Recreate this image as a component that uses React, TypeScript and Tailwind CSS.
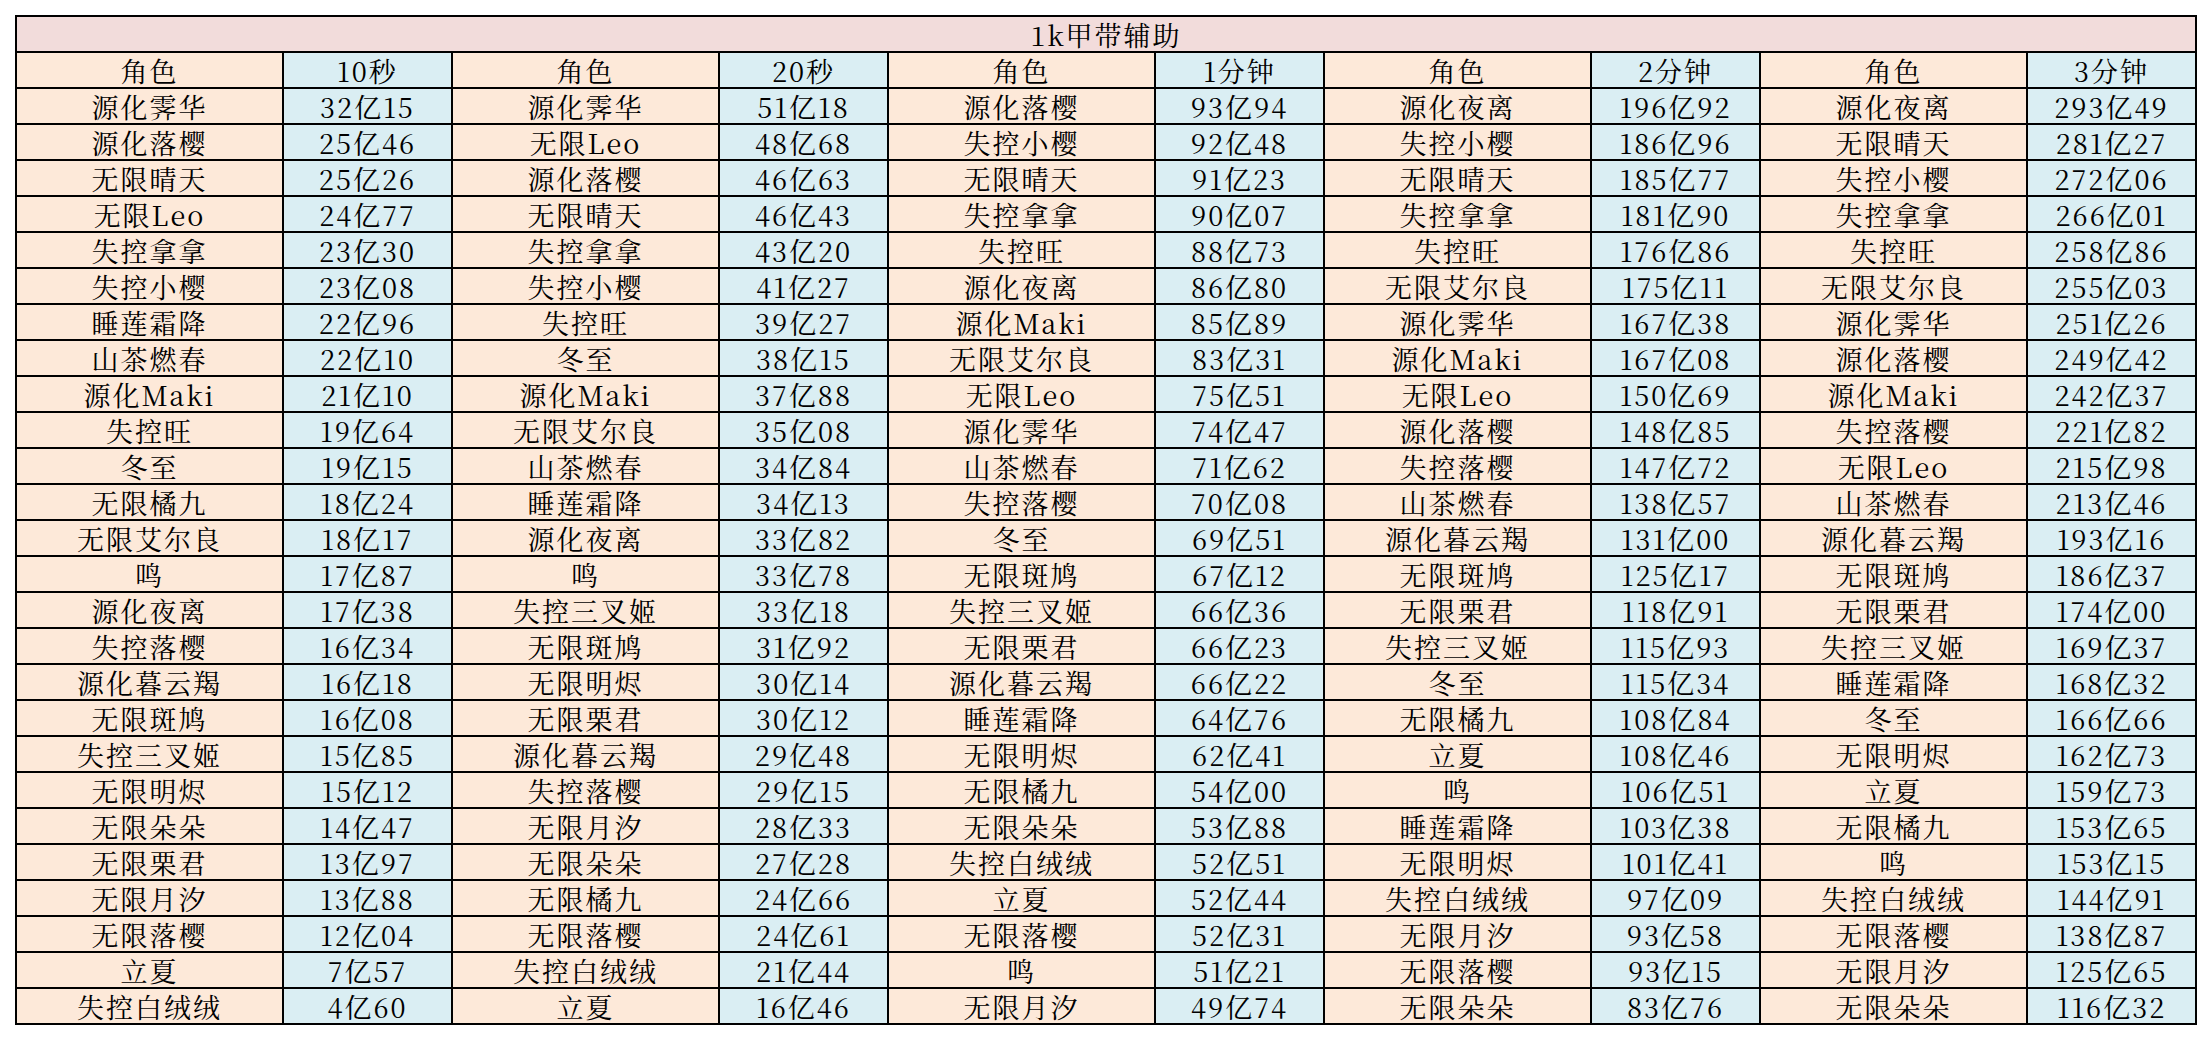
import * as React from "react";

type Row = [string, string, string, string, string, string, string, string, string, string];

const headers = ["角色", "10秒", "角色", "20秒", "角色", "1分钟", "角色", "2分钟", "角色", "3分钟"];

const rows: Row[] = [
  ["源化霁华", "32亿15", "源化霁华", "51亿18", "源化落樱", "93亿94", "源化夜离", "196亿92", "源化夜离", "293亿49"],
  ["源化落樱", "25亿46", "无限Leo", "48亿68", "失控小樱", "92亿48", "失控小樱", "186亿96", "无限晴天", "281亿27"],
  ["无限晴天", "25亿26", "源化落樱", "46亿63", "无限晴天", "91亿23", "无限晴天", "185亿77", "失控小樱", "272亿06"],
  ["无限Leo", "24亿77", "无限晴天", "46亿43", "失控拿拿", "90亿07", "失控拿拿", "181亿90", "失控拿拿", "266亿01"],
  ["失控拿拿", "23亿30", "失控拿拿", "43亿20", "失控旺", "88亿73", "失控旺", "176亿86", "失控旺", "258亿86"],
  ["失控小樱", "23亿08", "失控小樱", "41亿27", "源化夜离", "86亿80", "无限艾尔良", "175亿11", "无限艾尔良", "255亿03"],
  ["睡莲霜降", "22亿96", "失控旺", "39亿27", "源化Maki", "85亿89", "源化霁华", "167亿38", "源化霁华", "251亿26"],
  ["山茶燃春", "22亿10", "冬至", "38亿15", "无限艾尔良", "83亿31", "源化Maki", "167亿08", "源化落樱", "249亿42"],
  ["源化Maki", "21亿10", "源化Maki", "37亿88", "无限Leo", "75亿51", "无限Leo", "150亿69", "源化Maki", "242亿37"],
  ["失控旺", "19亿64", "无限艾尔良", "35亿08", "源化霁华", "74亿47", "源化落樱", "148亿85", "失控落樱", "221亿82"],
  ["冬至", "19亿15", "山茶燃春", "34亿84", "山茶燃春", "71亿62", "失控落樱", "147亿72", "无限Leo", "215亿98"],
  ["无限橘九", "18亿24", "睡莲霜降", "34亿13", "失控落樱", "70亿08", "山茶燃春", "138亿57", "山茶燃春", "213亿46"],
  ["无限艾尔良", "18亿17", "源化夜离", "33亿82", "冬至", "69亿51", "源化暮云羯", "131亿00", "源化暮云羯", "193亿16"],
  ["鸣", "17亿87", "鸣", "33亿78", "无限斑鸠", "67亿12", "无限斑鸠", "125亿17", "无限斑鸠", "186亿37"],
  ["源化夜离", "17亿38", "失控三叉姬", "33亿18", "失控三叉姬", "66亿36", "无限栗君", "118亿91", "无限栗君", "174亿00"],
  ["失控落樱", "16亿34", "无限斑鸠", "31亿92", "无限栗君", "66亿23", "失控三叉姬", "115亿93", "失控三叉姬", "169亿37"],
  ["源化暮云羯", "16亿18", "无限明烬", "30亿14", "源化暮云羯", "66亿22", "冬至", "115亿34", "睡莲霜降", "168亿32"],
  ["无限斑鸠", "16亿08", "无限栗君", "30亿12", "睡莲霜降", "64亿76", "无限橘九", "108亿84", "冬至", "166亿66"],
  ["失控三叉姬", "15亿85", "源化暮云羯", "29亿48", "无限明烬", "62亿41", "立夏", "108亿46", "无限明烬", "162亿73"],
  ["无限明烬", "15亿12", "失控落樱", "29亿15", "无限橘九", "54亿00", "鸣", "106亿51", "立夏", "159亿73"],
  ["无限朵朵", "14亿47", "无限月汐", "28亿33", "无限朵朵", "53亿88", "睡莲霜降", "103亿38", "无限橘九", "153亿65"],
  ["无限栗君", "13亿97", "无限朵朵", "27亿28", "失控白绒绒", "52亿51", "无限明烬", "101亿41", "鸣", "153亿15"],
  ["无限月汐", "13亿88", "无限橘九", "24亿66", "立夏", "52亿44", "失控白绒绒", "97亿09", "失控白绒绒", "144亿91"],
  ["无限落樱", "12亿04", "无限落樱", "24亿61", "无限落樱", "52亿31", "无限月汐", "93亿58", "无限落樱", "138亿87"],
  ["立夏", "7亿57", "失控白绒绒", "21亿44", "鸣", "51亿21", "无限落樱", "93亿15", "无限月汐", "125亿65"],
  ["失控白绒绒", "4亿60", "立夏", "16亿46", "无限月汐", "49亿74", "无限朵朵", "83亿76", "无限朵朵", "116亿32"],
];

function Cell({ text, index }: { text: string; index: number }) {
  const isName = index % 2 === 0;
  return (
    <div
      className={
        isName
          ? "flex items-center justify-center bg-[#fde9d9] leading-none"
          : "flex items-center justify-center bg-[#daeef3] leading-none"
      }
    >
      {text}
    </div>
  );
}

export default function App() {
  return (
    <div className="min-h-screen bg-white pl-[15px] pt-[15px]">
      <div
        className="grid w-[2182px] grid-cols-[265px_167px_265px_167px_265px_167px_265px_167px_265px_167px] auto-rows-[34px] gap-[2px] bg-black p-[2px] text-[27px] tracking-[2px] text-black"
        style={{ fontFamily: '"Noto Serif CJK SC", "Liberation Serif", "Noto Sans CJK SC", serif' }}
      >
        <div className="col-span-10 flex items-center justify-center bg-[#f2dcdb] leading-none">1k甲带辅助</div>
        {headers.map((h, i) => (
          <Cell key={"h" + i} text={h} index={i} />
        ))}
        {rows.map((row, r) =>
          row.map((v, i) => <Cell key={r + "-" + i} text={v} index={i} />)
        )}
      </div>
    </div>
  );
}
